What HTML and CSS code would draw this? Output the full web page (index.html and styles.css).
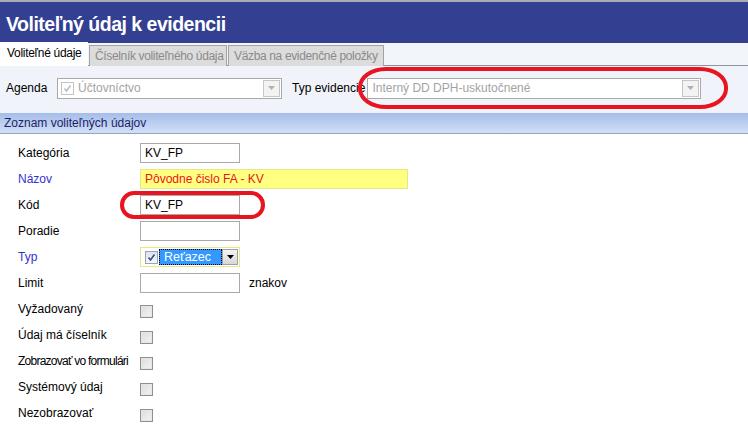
FILE: index.html
```html
<!DOCTYPE html>
<html lang="sk">
<head>
<meta charset="utf-8">
<title>Voliteľný údaj k evidencii</title>
<link rel="stylesheet" href="styles.css">
</head>
<body>
<div class="window">
  <div class="topline"></div>
  <div class="titlebar"><h1 class="title">Voliteľný údaj k evidencii</h1></div>
  <div class="tabstrip">
    <div class="tab tab-active">Voliteľné údaje</div>
    <div class="tab tab-num">Číselník voliteľného údaja</div>
    <div class="tab tab-link">Väzba na evidenčné položky</div>
  </div>
  <div class="filterbar">
    <span class="flabel">Agenda</span>
    <div class="combo combo-agenda">
      <span class="cb cb-disabled"><svg viewBox="0 0 11 11" width="11" height="11"><path d="M2.5 5.5 L4.5 8 L8.5 2.5" fill="none" stroke="#b8b8b8" stroke-width="1.4"/></svg></span>
      <span class="combo-text">Účtovníctvo</span>
      <span class="ddbtn"><svg viewBox="0 0 7 4" width="7" height="4"><path d="M0 0 H7 L3.5 4 Z" fill="#b0b0b0"/></svg></span>
    </div>
    <span class="flabel flabel-typ">Typ evidencie</span>
    <div class="combo combo-typ">
      <span class="combo-text">Interný DD DPH-uskutočnené</span>
      <span class="ddbtn"><svg viewBox="0 0 7 4" width="7" height="4"><path d="M0 0 H7 L3.5 4 Z" fill="#b0b0b0"/></svg></span>
    </div>
    <div class="mark mark-typ"></div>
  </div>
  <div class="sectionhead">Zoznam voliteľných údajov</div>
  <div class="form">
    <div class="row"><span class="label">Kategória</span><span class="input">KV_FP</span></div>
    <div class="row"><span class="label label-req">Názov</span><span class="input input-name">Pôvodne čislo FA - KV</span></div>
    <div class="row row-kod"><span class="label">Kód</span><span class="input">KV_FP</span><div class="mark mark-kod"></div></div>
    <div class="row"><span class="label">Poradie</span><span class="input"></span></div>
    <div class="row"><span class="label label-req">Typ</span>
      <div class="typcombo">
        <span class="cb cb-on"><svg viewBox="0 0 11 11" width="11" height="11"><path d="M2.5 5.5 L4.5 8 L8.5 2.5" fill="none" stroke="#3a4a8c" stroke-width="1.6"/></svg></span>
        <span class="sel">Reťazec</span>
        <span class="ddbtn ddbtn-dark"><svg viewBox="0 0 7 4" width="7" height="4"><path d="M0 0 H7 L3.5 4 Z" fill="#000"/></svg></span>
      </div>
    </div>
    <div class="row"><span class="label">Limit</span><span class="input"></span><span class="unit">znakov</span></div>
    <div class="row"><span class="label">Vyžadovaný</span><span class="check"></span></div>
    <div class="row"><span class="label">Údaj má číselník</span><span class="check"></span></div>
    <div class="row"><span class="label label-tight">Zobrazovať vo formulári</span><span class="check"></span></div>
    <div class="row"><span class="label">Systémový údaj</span><span class="check"></span></div>
    <div class="row"><span class="label">Nezobrazovať</span><span class="check"></span></div>
  </div>
</div>
</body>
</html>
```

FILE: styles.css
```css
* { box-sizing: border-box; }
html, body { margin: 0; padding: 0; background: #ffffff; }
body {
  font-family: "Liberation Sans", Arial, sans-serif;
  font-size: 12px;
  color: #000;
  width: 748px;
  height: 435px;
  overflow: hidden;
}
.window { width: 748px; }
.topline { height: 2px; background: #a9acb4; }
.titlebar {
  height: 41px;
  background: #333f91;
  display: flex;
  align-items: center;
  padding-left: 6px;
}
.title {
  margin: 0;
  color: #fff;
  font-family: "Liberation Sans", Arial, sans-serif;
  font-weight: bold;
  font-size: 19.5px;
  letter-spacing: -0.5px;
  padding-top: 3px;
}
.tabstrip {
  height: 23px;
  background: #f2f5fa;
  border-bottom: 1px solid #8e949c;
  display: flex;
  align-items: flex-end;
}
.tab {
  height: 21px;
  padding: 0 0 0 5px;
  margin-bottom: -1px;
  background: #dcdcdc;
  border: 1px solid #a3a3a3;
  border-bottom: none;
  color: #8a8a8a;
  display: flex;
  align-items: center;
  margin-right: 1px;
  white-space: nowrap;
  overflow: hidden;
  letter-spacing: -0.35px;
}
.tab-num { width: 138px; }
.tab-link { width: 156px; }
.tab-active {
  height: 24px;
  background: #fff;
  color: #000;
  border: none;
  width: 88px;
  padding-left: 7px;
  padding-bottom: 3px;
  letter-spacing: -0.3px;
}
.filterbar {
  position: relative;
  height: 47px;
  background: #f0f3f9;
  display: flex;
  align-items: center;
  padding-left: 6px;
  padding-bottom: 3px;
}
.flabel { width: 51px; }
.flabel-typ { width: auto; margin-left: 10px; margin-right: 2px; }
.combo {
  height: 21px;
  background: #fff;
  border: 1px solid #a9a9a9;
  display: flex;
  align-items: center;
  padding-left: 3px;
  color: #a3a3a3;
}
.combo-agenda { width: 225px; }
.combo-typ { width: 334px; padding-left: 4px; }
.combo-text { flex: 1; padding-left: 4px; white-space: nowrap; }
.combo-typ .combo-text { padding-left: 0; }
.cb {
  width: 13px;
  height: 13px;
  border: 1px solid #c4c4c4;
  display: flex;
  align-items: center;
  justify-content: center;
  background: #fff;
  flex: 0 0 13px;
}
.ddbtn {
  width: 17px;
  height: 17px;
  margin-right: 1px;
  border: 1px solid #c6c6c6;
  background: #f3f3f3;
  display: flex;
  align-items: center;
  justify-content: center;
  flex: 0 0 auto;
}
.mark {
  position: absolute;
  border: 4px solid #e8141f;
  pointer-events: none;
}
.mark-typ {
  left: 358px;
  top: 1px;
  width: 370px;
  height: 42px;
  border-radius: 28px / 20px;
}
.sectionhead {
  height: 21px;
  background: linear-gradient(#a6bdeb, #d2dff5);
  border-bottom: 1px solid #8fa6cc;
  color: #1d1f66;
  padding-left: 4px;
  display: flex;
  align-items: center;
}
.form { padding-top: 6px; padding-left: 18px; }
.row {
  position: relative;
  height: 26px;
  display: flex;
  align-items: center;
}
.label { flex: 0 0 122px; white-space: nowrap; }
.label-tight { letter-spacing: -0.75px; }
.label-req { color: #3232d2; }
.input {
  width: 100px;
  height: 20px;
  border: 1px solid #a9a9a9;
  background: #fff;
  padding-left: 4px;
  display: flex;
  align-items: center;
  white-space: nowrap;
}
.input-name {
  width: 268px;
  background: #ffff80;
  border-color: #e6e68a;
  color: #e8141f;
}
.mark-kod {
  left: 102px;
  top: -1px;
  width: 145px;
  height: 28px;
  border-radius: 14px;
}
.typcombo {
  width: 100px;
  height: 20px;
  border: 1px solid #e8e88a;
  background: #fff;
  display: flex;
  align-items: center;
  padding-left: 4px;
}
.cb-on { border-color: #9aa3b5; background: linear-gradient(#dfe3ea, #f6f7f9); }
.sel {
  width: 64px;
  height: 16px;
  margin-left: 1px;
  background: #3399ff;
  color: #fff;
  border: 1px dotted #000;
  padding-left: 4px;
  display: flex;
  align-items: center;
  font-size: 12.5px;
}
.ddbtn-dark {
  width: 16px;
  height: 16px;
  background: linear-gradient(#f4f4f4, #d8d8d8);
  border-color: #a0a0a0;
}
.unit { margin-left: 9px; }
.check {
  width: 13px;
  height: 13px;
  border: 1px solid #8f8f8f;
  background: linear-gradient(135deg, #dcdcdc, #f4f4f4);
  box-shadow: inset 0 0 0 1px #e6e6e6;
  margin-top: 5px;
}
```
